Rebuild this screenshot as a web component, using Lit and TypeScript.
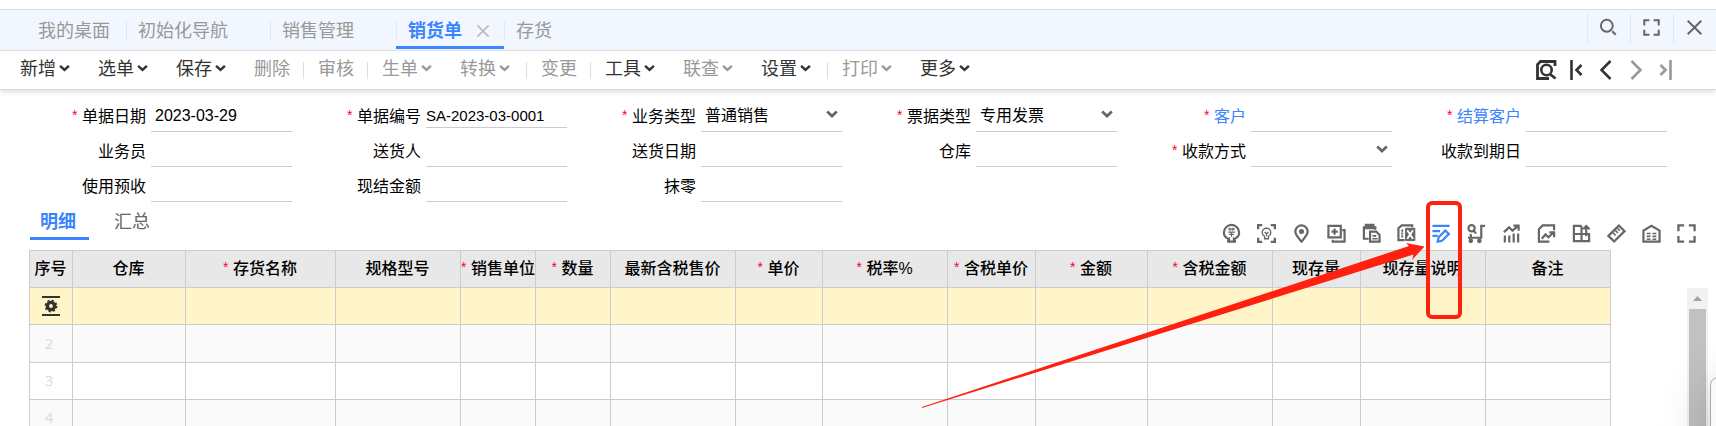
import { LitElement, html, svg, css, nothing } from "lit";
import type { TemplateResult } from "lit";
import { customElement, property } from "lit/decorators.js";
import { classMap } from "lit/directives/class-map.js";

type Glyph = ReturnType<typeof svg>;

/* Every glyph is drawn on a 20 x 20 grid. */
const glyphs: Record<string, Glyph> = {
  search: svg`<circle cx="8" cy="8" r="7" /><path d="M14.500 14.500 18.500 18.500" stroke-width="2.600" />`,
  expand: svg`<path d="M1.500 7.500V1.500H7.500M12.500 1.500H18.500V7.500M18.500 12.500V18.500H12.500M7.500 18.500H1.500V12.500" stroke-width="2.400" />`,
  close: svg`<path d="M2 2 18 18M18 2 2 18" />`,
  docSearch: svg`<path d="M19 6V1.500H4.500L1.500 4.500V18.500H13" stroke-width="2.800" /><circle cx="10.500" cy="10" r="5.200" stroke-width="2.600" /><path d="M14.500 14.500 19.500 18.500" stroke-width="2.800" />`,
  first: svg`<path d="M5.500 0V20" stroke-width="2.600" /><path d="M15.500 5 10.500 10 15.500 15" stroke-width="2.600" />`,
  prev: svg`<path d="M14.500 1 5.500 10 14.500 19" stroke-width="2.500" />`,
  next: svg`<path d="M5.500 1 14.500 10 5.500 19" stroke-width="2.500" />`,
  last: svg`<path d="M14.500 0V20" stroke-width="2.600" /><path d="M4.500 5 9.500 10 4.500 15" stroke-width="2.600" />`,
  recommend: svg`<path d="M6.500 15.500C3.500 14.300 2 11.800 2 9a8 8 0 0 1 16 0c0 2.800-1.500 5.300-4.500 6.500V18.500H6.500Z" /><path d="M6.500 5.500H13.500M8.500 4V7M11.500 4V7M6.500 8.500H13.500M7.500 11H12.500M10 8.500V13.500M8 14V18M12 14V18" stroke-width="1.300" />`,
  scanBulb: svg`<path d="M1.200 5.500V1.200H5.500M14.500 1.200H18.800V5.500M18.800 14.500V18.800H14.500M5.500 18.800H1.200V14.500" stroke-width="2.400" /><path d="M8 13C6.300 12.200 5.500 10.700 5.500 9a4.500 4.500 0 0 1 9 0C14.500 10.700 13.700 12.200 12 13V15.500H8ZM8 8.500 10 10.500 12 8.500M10 10.500V13" stroke-width="1.400" />`,
  pin: svg`<path d="M10 18.500C6.500 14.500 3.500 11.500 3.500 8a6.500 6.500 0 0 1 13 0c0 3.500-3 6.500-6.500 10.500Z" /><circle cx="10" cy="8" r="1.500" class="solid" />`,
  addCopy: svg`<path d="M1.500 2H14.500V14H1.500ZM8 4.700V11.300M4.700 8H11.300M16 6.500H18.500V18.500H6V16.500" />`,
  paste: svg`<path d="M7 15.500H2V3.500H14V6" /><path d="M4 1H12V4.500H4Z" class="solid" /><path d="M8.500 8H15L18.500 11.500V18.500H8.500Z" /><path d="M11 12.500H15M11 15.500H16.500" stroke-width="1.600" />`,
  listX: svg`<path d="M16 3.500V1.500H5L1.500 4.500V17H8" /><path d="M4.500 7H6.500M4.500 10H6.500M4.500 13H6.500" /><path d="M9 4.500H18.800V17.500H9Z" class="solid" stroke-width="1" /><path d="M10.800 6.500 16.800 15.500M16.800 6.500 10.800 15.500" stroke="#fff" stroke-width="2" />`,
  editLines: svg`<path d="M0.500 2H18.500M0.500 7.500H8.500M0.500 12.500H6" stroke-width="2.200" /><path d="M6 18.500 7 14 14 6.800 17.800 10.500 10.500 17.700Z" />`,
  cart: svg`<circle cx="4.800" cy="4.500" r="3.300" /><path d="M7 7 9.500 10M19 2H15V14.500H1M4 10.500V14" /><circle cx="4" cy="17.700" r="1.300" class="solid" /><circle cx="13" cy="17.700" r="1.300" class="solid" />`,
  trend: svg`<path d="M2 8.500 7.500 3.500 11 7 17 2M12 1.800H17.500V7M3 12V19.500M7.700 12V19.500M12.300 10V19.500M17 10V19.500" />`,
  docTrend: svg`<path d="M18 6.500V1.500H6L2 5.500V18.500H13" /><path d="M5 15.500 9 11 12 14 17.500 9M13 8.800H18V14" />`,
  blocks: svg`<path d="M10 2H2V18H18V10.500H2M10 2V18M15 13V2.500M11.800 5.500 15 2.200 18.500 5.500" />`,
  ruler: svg`<path d="M1.500 12.500 12.500 1.500 18.500 7.500 7.500 18.500Z" /><path d="M6 9 9 12M8.500 6.500 11.500 9.500M11 4.500 13.500 7" stroke-width="1.700" />`,
  warehouse: svg`<path d="M1.500 18.500V7L10 1.800 18.500 7V18.500Z" /><path d="M5 10H9M11 10H15M5 13H9M11 13H15M5 16H9M11 16H15" stroke-width="1.700" />`,
  rowGear: svg`<path d="M1 1H19M1 19H19" stroke-width="2" /><circle cx="10" cy="10" r="3.600" stroke-width="3.400" /><circle cx="10" cy="10" r="5.600" stroke-width="1.600" stroke-dasharray="2.200 2.198" />`,
  chevron: svg`<path d="M2 6 10 13.500 18 6" stroke-width="4.500" />`,
};

@customElement("line-icon")
class LineIcon extends LitElement {
  static styles = css`
    :host {
      display: block;
      width: 20px;
      height: 20px;
      flex: none;
    }
    .glyph {
      display: block;
      width: 100%;
      height: 100%;
      fill: none;
      stroke: currentColor;
      stroke-width: 2.3;
      overflow: visible;
    }
    .solid {
      fill: currentColor;
    }
  `;

  @property() name = "";

  render() {
    return html`<svg class="glyph" viewBox="0 0 20 20" aria-hidden="true">${glyphs[this.name]}</svg>`;
  }
}

interface Action {
  label?: string;
  menu?: boolean;
  off?: boolean;
}

const actions: Action[] = [
  { label: "新增", menu: true },
  { label: "选单", menu: true },
  { label: "保存", menu: true },
  { label: "删除", off: true },
  {},
  { label: "审核", off: true },
  {},
  { label: "生单", menu: true, off: true },
  { label: "转换", menu: true, off: true },
  {},
  { label: "变更", off: true },
  {},
  { label: "工具", menu: true },
  { label: "联查", menu: true, off: true },
  { label: "设置", menu: true },
  {},
  { label: "打印", menu: true, off: true },
  { label: "更多", menu: true },
];

interface Field {
  label: string;
  value?: string;
  required?: boolean;
  select?: boolean;
  link?: boolean;
  code?: boolean;
}

const rows: Field[][] = [
  [
    { label: "单据日期", value: "2023-03-29", required: true },
    { label: "单据编号", value: "SA-2023-03-0001", required: true, code: true },
    { label: "业务类型", value: "普通销售", required: true, select: true },
    { label: "票据类型", value: "专用发票", required: true, select: true },
    { label: "客户", required: true, link: true },
    { label: "结算客户", required: true, link: true },
  ],
  [
    { label: "业务员" },
    { label: "送货人" },
    { label: "送货日期" },
    { label: "仓库" },
    { label: "收款方式", required: true, select: true },
    { label: "收款到期日" },
  ],
  [{ label: "使用预收" }, { label: "现结金额" }, { label: "抹零" }],
];

const columns: [string, number, boolean?][] = [
  ["序号", 43],
  ["仓库", 113],
  ["存货名称", 150, true],
  ["规格型号", 125],
  ["销售单位", 75, true],
  ["数量", 75, true],
  ["最新含税售价", 125],
  ["单价", 87, true],
  ["税率%", 125, true],
  ["含税单价", 88, true],
  ["金额", 112, true],
  ["含税金额", 125, true],
  ["现存量", 88],
  ["现存量说明", 125],
  ["备注", 125],
];

const tools: [string, string][] = [
  ["recommend", "推荐"],
  ["scanBulb", "智能识别"],
  ["pin", "定位"],
  ["addCopy", "复制行"],
  ["paste", "粘贴"],
  ["listX", "导入"],
  ["editLines", "批量修改"],
  ["cart", "查询"],
  ["trend", "走势"],
  ["docTrend", "报表"],
  ["blocks", "布局"],
  ["ruler", "单位换算"],
  ["warehouse", "仓库"],
  ["expand", "全屏"],
];

@customElement("app-root")
class AppRoot extends LitElement {
  static styles = css`
    :host {
      display: flex;
      flex-direction: column;
      position: relative;
      box-sizing: border-box;
      height: 100vh;
      padding-top: 9px;
      overflow: hidden;
      background: #fff;
      color: #000;
      font: 16px/24px "Liberation Sans", "Noto Sans CJK SC", sans-serif;
    }
    button,
    input,
    select {
      margin: 0;
      padding: 0;
      border: 0;
      border-radius: 0;
      outline: 0;
      background: none;
      color: inherit;
      font: inherit;
    }
    .tabs {
      display: flex;
      flex: none;
      height: 40px;
      padding-left: 26px;
      border-top: 1px solid #dcdcdc;
      border-bottom: 1px solid #e4e6ea;
      background: #f1f6ff;
    }
    .tab {
      display: flex;
      align-items: center;
      position: relative;
      box-sizing: border-box;
      height: 39px;
      padding: 5px 42px 0 12px;
      border-bottom: 3px solid transparent;
      color: #999;
      font-size: 18px;
      white-space: nowrap;
    }
    .tab.home {
      padding-right: 16px;
    }
    .tab + .tab::before {
      content: "";
      position: absolute;
      left: 0;
      top: 11px;
      width: 1px;
      height: 20px;
      background: #e2e6ee;
    }
    .tab.active {
      border-bottom-color: #3a84ff;
      color: #3a84ff;
      font-weight: 700;
    }
    .tab-close {
      position: absolute;
      right: 14px;
      top: 14px;
      width: 14px;
      height: 14px;
      color: #bbb;
    }
    .window {
      display: flex;
      height: 30px;
      margin: 4px 0 0 auto;
      color: #666;
    }
    .window-button {
      display: flex;
      align-items: center;
      justify-content: center;
      box-sizing: border-box;
      width: 43px;
      padding: 0 2px 4px 0;
      border-left: 1px solid #e2e6ee;
    }
    .window-icon {
      width: 17px;
      height: 17px;
    }
    .toolbar {
      display: flex;
      flex: none;
      align-items: center;
      height: 38px;
      padding: 0 35px 0 6px;
      border-bottom: 1px solid #d8d8d8;
      box-shadow: 0 2px 5px rgba(0, 0, 0, 0.14);
      font-size: 18px;
    }
    .action {
      display: flex;
      align-items: center;
      gap: 3px;
      padding: 0 14px 2px;
      color: #333;
      white-space: nowrap;
    }
    .action.off {
      color: #999;
    }
    .action-chevron {
      width: 11px;
      height: 14px;
      margin-bottom: 2px;
    }
    .separator {
      width: 1px;
      height: 17px;
      margin-left: -1px;
      background: #ddd;
    }
    .menu + .separator {
      margin-left: 2px;
    }
    .pager {
      display: flex;
      margin-left: auto;
      color: #333;
    }
    .pager-button {
      display: flex;
      justify-content: center;
      width: 30px;
    }
    .pager-button.off {
      color: #999;
    }
    .form {
      display: grid;
      flex: none;
      padding: 7px 49px 0 17px;
    }
    .form-row {
      display: grid;
      grid-template-columns: repeat(6, 1fr);
    }
    .field {
      display: flex;
      align-items: flex-start;
      justify-content: flex-end;
      gap: 5px;
      height: 29px;
      padding-top: 6px;
    }
    .label {
      line-height: 27px;
      white-space: nowrap;
    }
    .label.link {
      color: #3a84ff;
    }
    .star {
      display: inline-block;
      width: 10px;
      color: #ff0033;
      font: 400 14px/14px "Liberation Sans", sans-serif;
      vertical-align: 2px;
      text-align: left;
    }
    .control {
      position: relative;
      width: 141px;
    }
    .input {
      display: block;
      box-sizing: border-box;
      width: 100%;
      height: 29px;
      padding: 0 4px 2px;
      border-bottom: 1px solid #ccc;
      appearance: none;
    }
    .input.code {
      height: 25px;
      padding: 0;
      font-size: 15px;
    }
    .select-chevron {
      position: absolute;
      right: 4px;
      top: 4px;
      width: 12px;
      height: 14px;
      color: #666;
      pointer-events: none;
    }
    .detail-bar {
      display: flex;
      flex: none;
      align-items: flex-start;
      height: 48px;
      padding: 0 12px 0 30px;
    }
    .detail-tabs {
      display: flex;
      gap: 15px;
    }
    .detail-tab {
      box-sizing: border-box;
      width: 59px;
      height: 38px;
      padding: 4px 3px 0 0;
      border-bottom: 3px solid transparent;
      color: #666;
      font-size: 18px;
      white-space: nowrap;
    }
    .detail-tab.active {
      border-bottom-color: #3a84ff;
      color: #3a84ff;
      font-weight: 700;
    }
    .tools {
      display: flex;
      margin: 14px 0 0 auto;
      color: #666;
    }
    .tool {
      display: flex;
      align-items: center;
      justify-content: center;
      width: 35px;
      height: 34px;
    }
    .tool.active {
      color: #3a84ff;
    }
    .tool-icon {
      width: 19px;
      height: 19px;
    }
    .sheet {
      display: flex;
      flex: 1;
      min-height: 0;
      padding: 0 8px 0 29px;
    }
    .scroller {
      flex: 1;
      min-width: 0;
      overflow: hidden;
    }
    .grid {
      width: 1582px;
      box-sizing: border-box;
      border: 1px solid #ccc;
      border-width: 1px 0 0 1px;
      border-collapse: separate;
      border-spacing: 0;
      table-layout: fixed;
    }
    .head,
    .cell {
      box-sizing: border-box;
      height: 37px;
      padding: 0;
      border: 1px solid #ccc;
      border-width: 0 1px 1px 0;
      text-align: center;
      white-space: nowrap;
    }
    .head {
      padding-right: 1px;
      background: #e8e8e8;
      font-weight: 500;
    }
    .row:nth-child(even) .cell {
      background: #fafafa;
    }
    .row.current .cell {
      background: #fff5c9;
    }
    .row:nth-child(2) .cell {
      height: 38px;
    }
    .index {
      padding: 0 4px 2px 0;
      color: #ddd;
      font-family: "Noto Sans", sans-serif;
      font-size: 15px;
    }
    .row-icon {
      margin: 0 auto;
      color: #333;
    }
    .current .index {
      padding: 0;
    }
    .scrollbar {
      width: 21px;
      margin-top: 38px;
      background: #f1f1f1;
    }
    .scroll-up {
      display: flex;
      align-items: center;
      justify-content: center;
      width: 21px;
      height: 21px;
    }
    .scroll-arrow {
      width: 9px;
      height: 5px;
      fill: #a3a3a3;
    }
    .thumb {
      height: 100%;
      margin: 0 2px;
      background: #c1c1c1;
    }
    .drawer {
      position: absolute;
      right: -54px;
      top: 377px;
      width: 60px;
      height: 120px;
      box-sizing: border-box;
      border: 1px solid #aaa;
      border-radius: 8px;
      background: #fafafa;
      box-shadow: 0 12px 50px rgba(0, 0, 0, 0.22);
    }
    .callout {
      position: absolute;
      right: 254px;
      top: 201px;
      width: 540px;
      height: 207px;
      overflow: visible;
      pointer-events: none;
    }
    .callout-box {
      fill: none;
      stroke: #ff2010;
      stroke-width: 4;
    }
    .callout-arrow {
      fill: #ff2010;
    }
  `;

  private star(on?: boolean): TemplateResult | typeof nothing {
    return on ? html`<span class="star">*</span>` : nothing;
  }

  private field(f: Field, id: string): TemplateResult {
    return html`<div class="field">
      <label class=${classMap({ label: true, link: !!f.link })} for=${id}>${this.star(f.required)}${f.label}</label>
      <div class="control">
        ${f.select
          ? html`<select class="input" id=${id}>
                <option>${f.value ?? ""}</option>
              </select>
              <line-icon class="select-chevron" name="chevron"></line-icon>`
          : html`<input class=${classMap({ input: true, code: !!f.code })} id=${id} type="text" .value=${f.value ?? ""} />`}
      </div>
    </div>`;
  }

  render() {
    return html`
      <nav class="tabs">
        <button class="tab home">我的桌面</button>
        <button class="tab">初始化导航</button>
        <button class="tab">销售管理</button>
        <button class="tab active">销货单<line-icon class="tab-close" name="close"></line-icon></button>
        <button class="tab">存货</button>
        <div class="window">
          ${[
            ["search", "搜索"],
            ["expand", "全屏"],
            ["close", "关闭"],
          ].map(
            ([name, label]) =>
              html`<button class="window-button" aria-label=${label}>
                <line-icon class="window-icon" name=${name}></line-icon>
              </button>`
          )}
        </div>
      </nav>

      <div class="toolbar">
        ${actions.map((a) =>
          a.label
            ? html`<button class=${classMap({ action: true, menu: !!a.menu, off: !!a.off })}>
                ${a.label}${a.menu ? html`<line-icon class="action-chevron" name="chevron"></line-icon>` : nothing}
              </button>`
            : html`<span class="separator"></span>`
        )}
        <div class="pager">
          <button class="pager-button" aria-label="预览"><line-icon name="docSearch"></line-icon></button>
          <button class="pager-button" aria-label="首张"><line-icon name="first"></line-icon></button>
          <button class="pager-button" aria-label="上一张"><line-icon name="prev"></line-icon></button>
          <button class="pager-button off" aria-label="下一张"><line-icon name="next"></line-icon></button>
          <button class="pager-button off" aria-label="末张"><line-icon name="last"></line-icon></button>
        </div>
      </div>

      <form class="form">
        ${rows.map((r, y) => html`<div class="form-row">${r.map((f, x) => this.field(f, `field-${y}-${x}`))}</div>`)}
      </form>

      <div class="detail-bar">
        <div class="detail-tabs">
          <button class="detail-tab active">明细</button>
          <button class="detail-tab">汇总</button>
        </div>
        <div class="tools">
          ${tools.map(
            ([name, label]) =>
              html`<button class=${classMap({ tool: true, active: name === "editLines" })} aria-label=${label}>
                <line-icon class="tool-icon" name=${name}></line-icon>
              </button>`
          )}
        </div>
      </div>

      <div class="sheet">
        <div class="scroller">
          <table class="grid">
            <colgroup>
              ${columns.map(([, width]) => html`<col style="width:${width}px" />`)}
            </colgroup>
            <thead>
              <tr>
                ${columns.map(([name, , required]) => html`<th class="head">${this.star(required)}${name}</th>`)}
              </tr>
            </thead>
            <tbody>
              ${[1, 2, 3, 4].map(
                (n) => html`<tr class=${classMap({ row: true, current: n === 1 })}>
                  <td class="cell index">
                    ${n === 1 ? html`<line-icon class="row-icon" name="rowGear"></line-icon>` : n}
                  </td>
                  ${columns.slice(1).map(() => html`<td class="cell"></td>`)}
                </tr>`
              )}
            </tbody>
          </table>
        </div>
        <div class="scrollbar">
          <button class="scroll-up" aria-label="向上滚动">
            <svg class="scroll-arrow" viewBox="0 0 9 5"><path d="M0 5 4.500 0 9 5Z" /></svg>
          </button>
          <div class="thumb"></div>
        </div>
      </div>

      <div class="drawer"></div>
      <svg class="callout" viewBox="0 0 540 207" aria-hidden="true">
        <path class="callout-arrow" d="M0 206 487 45 484 42 502.500 45.500 490 59 491.500 53.500 0 207Z" />
        <rect class="callout-box" x="506" y="2" width="32" height="114" rx="4" />
      </svg>
    `;
  }
}
